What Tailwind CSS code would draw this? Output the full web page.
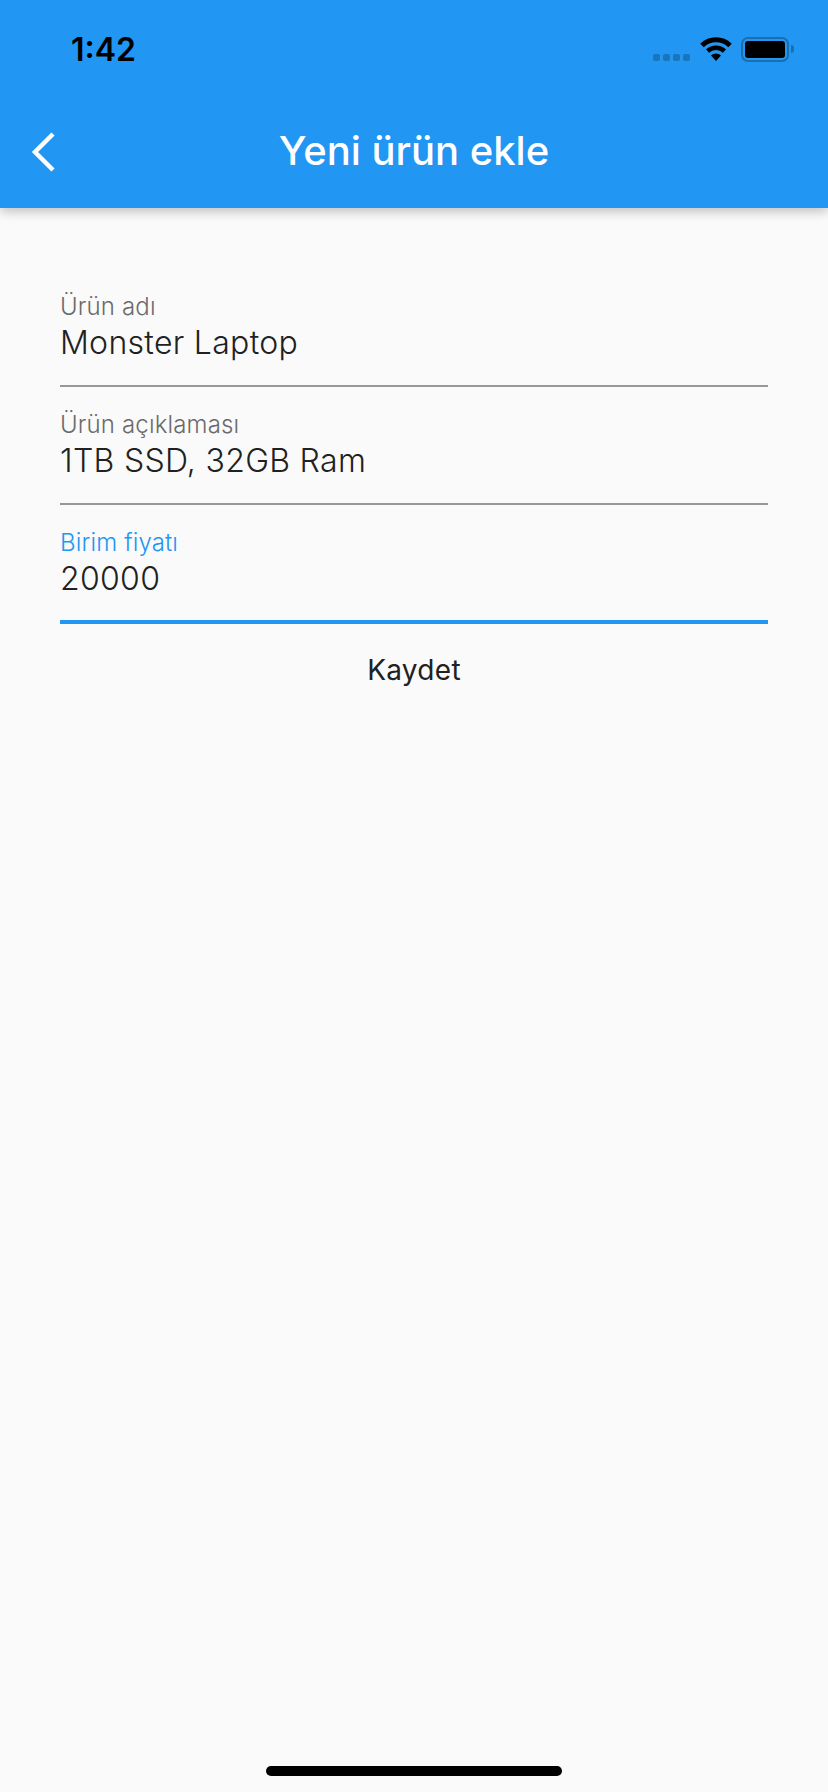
<!DOCTYPE html>
<html lang="en">
<head>
    <meta charset="UTF-8">
    <meta name="viewport" content="width=device-width, initial-scale=1.0">
    <title>Yeni ürün ekle</title>
    <script src="https://cdn.jsdelivr.net/npm/@tailwindcss/browser@4"></script>
</head>
<body class="bg-[#fafafa] h-[1792px] flex flex-col font-['Inter',sans-serif] overflow-hidden">

    <!-- App bar -->
    <header class="bg-[#2196f3] h-[208px] shrink-0 shadow-[0_4px_10px_rgba(0,0,0,0.22)] relative">
        <!-- Status bar -->
        <div class="h-[88px] flex items-start justify-between pl-[71px] pr-[34px] pt-[30px]">
            <span class="text-[32px] leading-[40px] font-semibold text-black">1:42</span>
            <div class="flex items-start pt-[7px]">
                <div class="flex gap-[3px] mt-[17px] mr-[10px]">
                    <span class="w-[7px] h-[7px] rounded-[2px] bg-[#1b75bc]"></span>
                    <span class="w-[7px] h-[7px] rounded-[2px] bg-[#1b75bc]"></span>
                    <span class="w-[7px] h-[7px] rounded-[2px] bg-[#1b75bc]"></span>
                    <span class="w-[7px] h-[7px] rounded-[2px] bg-[#1b75bc]"></span>
                </div>
                <svg class="mr-[9px]" width="32" height="24" viewBox="0 0 32 24" fill="none" stroke="black">
                    <path d="M2 8.5A20 20 0 0 1 30 8.5" stroke-width="5"/>
                    <path d="M7.5 14A12.5 12.5 0 0 1 24.5 14" stroke-width="4.5"/>
                    <path d="M11 18.5A7 7 0 0 1 21 18.5L16 24Z" fill="black" stroke="none"/>
                </svg>
                <div class="w-[48px] h-[25px] rounded-[7px] border-2 border-[#1b6fae] p-[2px]">
                    <div class="w-full h-full rounded-[3px] bg-black"></div>
                </div>
                <span class="w-[3px] h-[8px] mt-[8px] ml-[2px] rounded-r-[3px] bg-[#1b6fae]"></span>
            </div>
        </div>
        <!-- Toolbar -->
        <div class="h-[120px] flex items-center justify-center relative pt-[6px]">
            <svg class="absolute left-[30px] top-[44px]" width="26" height="40" viewBox="0 0 26 40" fill="none" stroke="white" stroke-width="4.5">
                <path d="M23 2L5 20L23 38"/>
            </svg>
            <h1 class="text-[40px] leading-[48px] font-medium text-white">Yeni ürün ekle</h1>
        </div>
    </header>

    <!-- Form -->
    <main class="flex-1 px-[60px] pt-[61px] flex flex-col">
        <div class="h-[118px] border-b-2 border-[#979797] pt-[24px]">
            <div class="text-[24px] leading-[28px] font-[350] tracking-[0.15px] text-[#6b6b6b]">Ürün adı</div>
            <div class="text-[32px] leading-[44px] font-[350] tracking-[0.3px] text-[#212121]">Monster Laptop</div>
        </div>
        <div class="h-[118px] border-b-2 border-[#979797] pt-[24px]">
            <div class="text-[24px] leading-[28px] font-[350] tracking-[0.15px] text-[#6b6b6b]">Ürün açıklaması</div>
            <div class="text-[32px] leading-[44px] font-[350] tracking-[0.3px] text-[#212121]">1TB SSD, 32GB Ram</div>
        </div>
        <div class="h-[119px] border-b-4 border-[#2196f3] pt-[24px]">
            <div class="text-[24px] leading-[28px] font-[350] tracking-[0.15px] text-[#2196f3]">Birim fiyatı</div>
            <div class="text-[32px] leading-[44px] font-[350] tracking-[0.3px] text-[#212121]">20000</div>
        </div>
        <button class="h-[88px] pt-[4px] flex items-center justify-center text-[28px] font-normal tracking-[0.3px] text-[#212121]">Kaydet</button>
    </main>

    <!-- Home indicator -->
    <div class="h-[26px] shrink-0 flex justify-center">
        <span class="w-[296px] h-[10px] rounded-full bg-black"></span>
    </div>

</body>
</html>
